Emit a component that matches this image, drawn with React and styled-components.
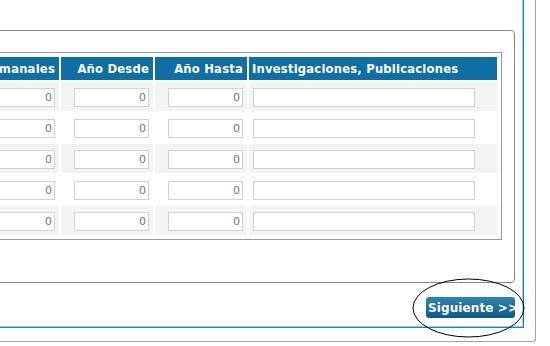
import React from "react";
import styled, { createGlobalStyle } from "styled-components";

const Global = createGlobalStyle`
  html, body { margin: 0; padding: 0; background: #fff; overflow: hidden; }
  body { width: 550px; height: 346px; font-family: "DejaVu Sans", Verdana, sans-serif; }
`;

const Frame = styled.div`
  width: 536px;
  height: 342px;
  box-sizing: border-box;
  border-right: 1px solid #a3a3a3;
  border-bottom: 1px solid #a3a3a3;
  border-bottom-right-radius: 3px;
`;

const Panel = styled.div`
  position: relative;
  width: 524px;
  height: 328px;
  box-sizing: border-box;
  border-right: 1px solid #1a86bf;
  border-bottom: 1px solid #1a86bf;
  box-shadow: inset -1px -1px 0 #8fd3ef;
  padding-top: 30px;
  display: flex;
  flex-direction: column;
`;

const Fieldset = styled.div`
  margin: 0 8px 0 -200px;
  border: 1px solid #8a8a8a;
  border-radius: 4px;
  padding: 21px 12px 42px 0;
  display: flex;
  justify-content: flex-end;
`;

const Grid = styled.table`
  border: 1px solid #9a9a9a;
  border-spacing: 2px;
  padding: 2px;
  background: #fff;
`;

const Head = styled.th`
  height: 23px;
  padding: ${(p) => (p.$left ? "0 0 0 3px" : "0 4px 0 0")};
  background: #0f6ea3;
  color: #fff;
  font: bold 11.6px "DejaVu Sans", Verdana, sans-serif;
  letter-spacing: 0.2px;
  text-align: ${(p) => (p.$left ? "left" : "right")};
  white-space: nowrap;
  width: ${(p) => p.$w}px;
  box-sizing: border-box;
`;

const Cell = styled.td`
  height: 29px;
  padding: 0 4px;
  box-sizing: border-box;
  background: ${(p) => (p.$shade ? "#f3f3f3" : "#fff")};
  text-align: ${(p) => (p.$left ? "left" : "right")};
  vertical-align: middle;
`;

const Field = styled.input`
  width: ${(p) => p.$w}px;
  height: 19px;
  box-sizing: border-box;
  border: 1px solid #d2d2d2;
  background: #fff;
  padding: 0 2px;
  margin: 0;
  font: 11px "DejaVu Sans", Verdana, sans-serif;
  color: #777;
  text-align: right;
  display: inline-block;
  vertical-align: middle;
  outline: none;
`;

const Actions = styled.div`
  display: flex;
  justify-content: flex-end;
  padding-right: 8px;
  margin-top: 14px;
`;

const Button = styled.button`
  width: 89px;
  height: 21px;
  border: none;
  border-radius: 3px;
  background: linear-gradient(#3284b4, #0c5a86);
  color: #fff;
  font: bold 12px "DejaVu Sans", Verdana, sans-serif;
  padding: 0 0 0 2px;
  white-space: nowrap;
  text-align: left;
  letter-spacing: 0.1px;
`;

const Mark = styled.svg`
  position: absolute;
  left: 412px;
  top: 278px;
  overflow: visible;
`;

const cols = [
  { label: "Horas Semanales", w: 150, input: 140 },
  { label: "Año Desde", w: 92, input: 75 },
  { label: "Año Hasta", w: 92, input: 75 },
  { label: "Investigaciones, Publicaciones", w: 248, input: 222, left: true },
];

export default function App() {
  const rows = [0, 1, 2, 3, 4];
  return (
    <>
      <Global />
      <Frame>
        <Panel>
          <Fieldset>
            <Grid>
              <thead>
                <tr>
                  {cols.map((c) => (
                    <Head key={c.label} $w={c.w} $left={c.left}>
                      {c.label}
                    </Head>
                  ))}
                </tr>
              </thead>
              <tbody>
                {rows.map((r) => (
                  <tr key={r}>
                    {cols.map((c) => (
                      <Cell key={c.label} $shade={r % 2 === 0} $left={c.left}>
                        <Field
                          $w={c.input}
                          defaultValue={c.left ? "" : "0"}
                          readOnly
                        />
                      </Cell>
                    ))}
                  </tr>
                ))}
              </tbody>
            </Grid>
          </Fieldset>
          <Actions>
            <Button>Siguiente &gt;&gt;</Button>
          </Actions>
          <Mark width="114" height="60" viewBox="0 0 114 60">
            <ellipse cx="56.5" cy="30" rx="55.5" ry="29" fill="none" stroke="#000" strokeWidth="1" />
          </Mark>
        </Panel>
      </Frame>
    </>
  );
}
